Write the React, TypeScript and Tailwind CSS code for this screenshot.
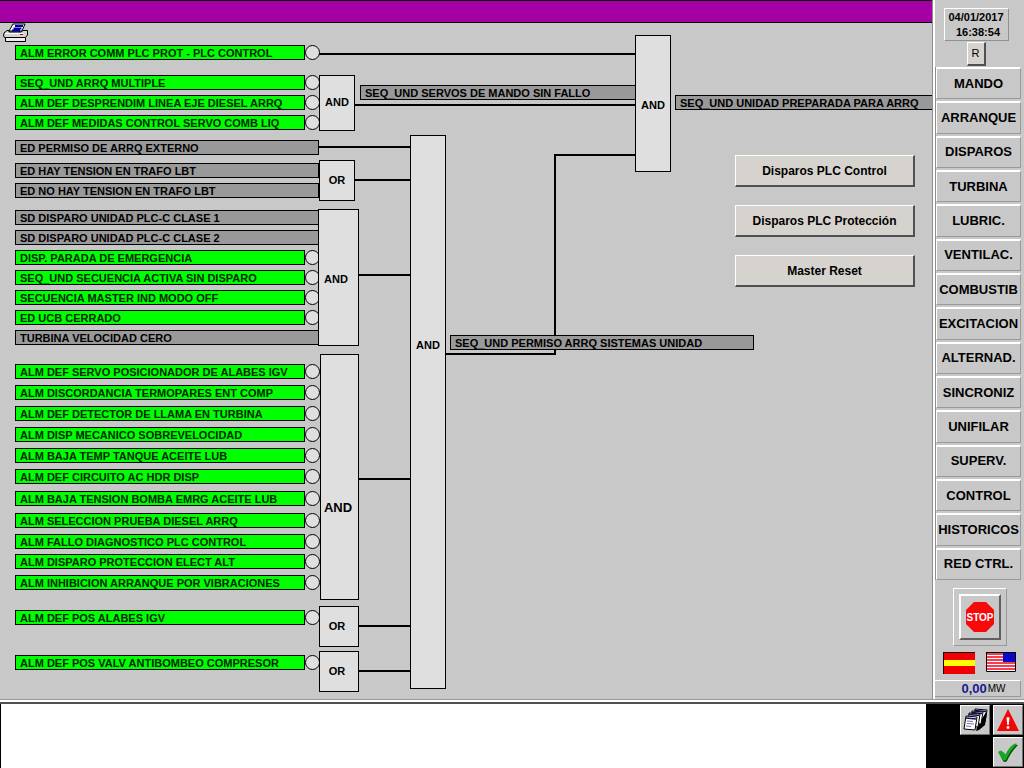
import React, { useState } from 'react';
import clsx from 'clsx';

type Signal = {
  text: string;
  top: number;
  // inverted inputs are drawn green with a negation circle
  inverted?: boolean;
};

type Gate = {
  label: string;
  left: number;
  top: number;
  width: number;
  height: number;
  labelTop: number;
  large?: boolean;
};

type Output = {
  text: string;
  left: number;
  top: number;
};

const signals: Signal[] = [
  { text: 'ALM ERROR COMM PLC PROT - PLC CONTROL', top: 45, inverted: true },
  { text: 'SEQ_UND ARRQ MULTIPLE', top: 75, inverted: true },
  { text: 'ALM DEF DESPRENDIM LINEA EJE DIESEL ARRQ', top: 95, inverted: true },
  { text: 'ALM DEF MEDIDAS CONTROL SERVO COMB LIQ', top: 115, inverted: true },
  { text: 'ED PERMISO DE ARRQ EXTERNO', top: 140 },
  { text: 'ED HAY TENSION EN TRAFO LBT', top: 163 },
  { text: 'ED NO HAY TENSION EN TRAFO LBT', top: 183 },
  { text: 'SD DISPARO UNIDAD PLC-C CLASE 1', top: 210 },
  { text: 'SD DISPARO UNIDAD PLC-C CLASE 2', top: 230 },
  { text: 'DISP. PARADA DE EMERGENCIA', top: 250, inverted: true },
  { text: 'SEQ_UND SECUENCIA ACTIVA SIN DISPARO', top: 270, inverted: true },
  { text: 'SECUENCIA MASTER IND MODO OFF', top: 290, inverted: true },
  { text: 'ED UCB CERRADO', top: 310, inverted: true },
  { text: 'TURBINA VELOCIDAD CERO', top: 330 },
  { text: 'ALM DEF SERVO POSICIONADOR DE ALABES IGV', top: 364, inverted: true },
  { text: 'ALM DISCORDANCIA TERMOPARES ENT COMP', top: 385, inverted: true },
  { text: 'ALM DEF DETECTOR DE LLAMA EN TURBINA', top: 406, inverted: true },
  { text: 'ALM DISP MECANICO SOBREVELOCIDAD', top: 427, inverted: true },
  { text: 'ALM BAJA TEMP TANQUE ACEITE LUB', top: 448, inverted: true },
  { text: 'ALM DEF CIRCUITO AC HDR DISP', top: 469, inverted: true },
  { text: 'ALM BAJA TENSION BOMBA EMRG ACEITE LUB', top: 491, inverted: true },
  { text: 'ALM SELECCION PRUEBA DIESEL ARRQ', top: 513, inverted: true },
  { text: 'ALM FALLO DIAGNOSTICO PLC CONTROL', top: 534, inverted: true },
  { text: 'ALM DISPARO PROTECCION ELECT ALT', top: 554, inverted: true },
  { text: 'ALM INHIBICION ARRANQUE POR VIBRACIONES', top: 575, inverted: true },
  { text: 'ALM DEF POS ALABES IGV', top: 610, inverted: true },
  { text: 'ALM DEF POS VALV ANTIBOMBEO COMPRESOR', top: 655, inverted: true },
];

const gates: Gate[] = [
  { label: 'AND', left: 319, top: 75, width: 36, height: 56, labelTop: 18 },
  { label: 'OR', left: 319, top: 160, width: 36, height: 41, labelTop: 11 },
  { label: 'AND', left: 318, top: 209, width: 41, height: 137, labelTop: 61 },
  { label: 'AND', left: 320, top: 354, width: 39, height: 246, labelTop: 145, large: true },
  { label: 'OR', left: 319, top: 606, width: 40, height: 41, labelTop: 11 },
  { label: 'OR', left: 319, top: 651, width: 40, height: 41, labelTop: 11 },
  { label: 'AND', left: 410, top: 135, width: 36, height: 554, labelTop: 201 },
  { label: 'AND', left: 635, top: 35, width: 36, height: 137, labelTop: 61 },
];

const outputs: Output[] = [
  { text: 'SEQ_UND SERVOS DE MANDO SIN FALLO', left: 360, top: 85 },
  { text: 'SEQ_UND UNIDAD PREPARADA PARA ARRQ', left: 675, top: 95 },
  { text: 'SEQ_UND PERMISO ARRQ SISTEMAS UNIDAD', left: 450, top: 335 },
];

const wires = [
  'M319 54H636',
  'M354 105H636',
  'M318 147H411',
  'M354 180H411',
  'M358 275H411',
  'M358 479H411',
  'M358 626H411',
  'M358 671H411',
  'M445 354H555V155H636',
];

const actions = ['Disparos PLC Control', 'Disparos PLC Protección', 'Master Reset'];

const menu = [
  'MANDO',
  'ARRANQUE',
  'DISPAROS',
  'TURBINA',
  'LUBRIC.',
  'VENTILAC.',
  'COMBUSTIB',
  'EXCITACION',
  'ALTERNAD.',
  'SINCRONIZ',
  'UNIFILAR',
  'SUPERV.',
  'CONTROL',
  'HISTORICOS',
  'RED CTRL.',
];

const PrinterIcon = () => (
  <svg width="26" height="20" viewBox="0 0 26 20" aria-hidden="true">
    <path d="M10 1H22L19 8H6Z" fill="#fff" stroke="#000" />
    <path d="M12 3H20M10.500 5.500H18.500M9 7.500H17" stroke="#0000b0" strokeWidth="1.800" />
    <path d="M1 10L4 7.500H6V9H18L20 7.500H24.500V12L22 15H2L0.500 13Z" fill="#d4d4d4" stroke="#000" />
    <path d="M2 10.500H20" stroke="#fff" />
    <path d="M17 11.500H20" stroke="#c00000" />
    <path d="M2.500 14.500H22.500V18.500H2.500Z" fill="#ececec" stroke="#000" />
  </svg>
);

const StopIcon = () => (
  <svg width="30" height="32" viewBox="0 0 30 32" aria-hidden="true">
    <path d="M9 1H21L29 9V23L21 31H9L1 23V9Z" fill="#f80808" />
    <text
      x="15"
      y="20"
      textAnchor="middle"
      fill="#fff"
      className="font-['Liberation_Sans_Narrow','Liberation_Sans',sans-serif] text-[10px] font-bold"
    >
      STOP
    </text>
  </svg>
);

const SpainFlag = () => (
  <svg width="32" height="22" viewBox="0 0 32 22" aria-hidden="true">
    <path d="M0 0H32V22H0Z" fill="#f00000" />
    <path d="M0 8H32V14H0Z" fill="#ffff00" />
    <path d="M0 0.500H32M0.500 0V22" stroke="#200000" />
  </svg>
);

const UsaFlag = () => (
  <svg width="30" height="20" viewBox="0 0 30 20" aria-hidden="true">
    <path d="M0 0H30V20H0Z" fill="#fff" />
    <path d="M0 2H30M0 5H30M0 8H30M0 11H30M0 14H30M0 17H30" stroke="#f00018" strokeWidth="1.600" />
    <path d="M17 0H30V10H17Z" fill="#0808c8" />
    <path d="M0.500 0V19.500H29.500V0.500H0" fill="none" stroke="#000" />
  </svg>
);

const PagesIcon = () => (
  <svg width="26" height="24" viewBox="0 0 26 24" aria-hidden="true">
    <path d="M13 1L25 2L23 14L12 13Z" fill="#fff" stroke="#000" />
    <path d="M24 4L25 5L23 17L17 22L14 23L15 19Z" fill="#000" />
    <path d="M10 3L21 4L19 16L9 15Z" fill="#fff" stroke="#000" />
    <path d="M7 5L18 6L16 19L6 18Z" fill="#fff" stroke="#000" />
    <path d="M4 8L15 9L13 22L2 21Z" fill="#fff" stroke="#000" />
    <path d="M5 13L11 13.500M5 15.500L12 16M4 18L9 18.500" stroke="#7070a0" />
    <path d="M13 2.500L24 3.500M10 4.500L20 5.500M7 6.500L17 7.500M4 10L14 11" stroke="#101050" strokeWidth="1.500" />
  </svg>
);

const AlertIcon = () => (
  <svg width="24" height="24" viewBox="0 0 24 24" aria-hidden="true">
    <path d="M12 1L23 23H1Z" fill="#f00808" />
    <path d="M10.500 10Q12 8 13.500 10L12.700 17H11.300Z" fill="#fff" />
    <circle cx="12" cy="19.500" r="1.400" fill="#fff" />
  </svg>
);

const CheckIcon = () => (
  <svg width="24" height="24" viewBox="0 0 24 24" aria-hidden="true">
    <path d="M3 13Q6 11 8 13L10 16Q14 8 19 5H22Q15 12 11 21Q9 23 7 21Z" fill="#064d06" />
    <path d="M2 12Q5 9 7 12L9 15Q13 7 18 4Q20 3 21 4Q14 11 10 20Q8 21 7 20Z" fill="#18a828" />
  </svg>
);

const SignalRow: React.FC<Signal> = ({ text, top, inverted }) => (
  <div className="absolute left-[15px] flex" style={{ top }}>
    <div
      className={clsx(
        'h-[15px] border border-black pl-1 text-[11px] leading-[14px] whitespace-nowrap',
        inverted ? 'w-[290px] bg-[#00ff00] text-[#002800]' : 'w-[304px] bg-[#999999]'
      )}
    >
      {text}
    </div>
    {inverted && <div className="h-[15px] w-[15px] rounded-full border border-black bg-[#dfdfdf]" />}
  </div>
);

const GateBox: React.FC<Gate> = ({ label, left, top, width, height, labelTop, large }) => (
  <div
    className="absolute border border-black bg-[#dfdfdf]"
    style={{ left, top, width, height, paddingTop: labelTop }}
  >
    <div className={clsx('w-[34px] text-center leading-4', large ? 'text-[13px]' : 'text-[11px]')}>{label}</div>
  </div>
);

const Diagram = () => (
  <div className="absolute inset-0 overflow-hidden">
    <svg className="absolute inset-0 h-full w-full" aria-hidden="true">
      {wires.map((d) => (
        <path key={d} d={d} fill="none" stroke="#000" strokeWidth="2" />
      ))}
    </svg>
    {signals.map((signal) => (
      <SignalRow key={signal.text} {...signal} />
    ))}
    {outputs.map(({ text, left, top }) => (
      <div
        key={text}
        className="absolute h-[15px] w-[304px] border border-black bg-[#999999] pl-1 text-[11px] leading-[14px] whitespace-nowrap"
        style={{ left, top }}
      >
        {text}
      </div>
    ))}
    {gates.map((gate) => (
      <GateBox key={`${gate.left}-${gate.top}`} {...gate} />
    ))}
  </div>
);

const Sidebar = () => {
  const [active, setActive] = useState('');

  return (
    <aside className="flex w-[92px] shrink-0 flex-col border-l border-[#8c8c8c]">
      <div className="flex flex-1 flex-col items-center border-l-2 border-white pr-[3px]">
        <div className="mt-2 mr-1 h-[33px] w-[65px] border border-t-white border-r-[#909090] border-b-[#909090] border-l-white pt-px text-center text-[11px] leading-[15px]">
          <div>04/01/2017</div>
          <div className="pl-1">16:38:54</div>
        </div>
        <button
          type="button"
          className="mt-px mr-1 h-[24px] w-[19px] border border-t-white border-r-2 border-r-[#505050] border-b-2 border-b-[#505050] border-l-white bg-[#d6d3ce] text-[11px] font-normal"
        >
          R
        </button>
        <nav className="mt-px flex h-[513px] w-full flex-col gap-[2px] border-l border-[#8c8c8c]">
          {menu.map((item) => (
            <button
              key={item}
              type="button"
              aria-pressed={active === item}
              onClick={() => setActive(item)}
              className="flex flex-1 items-center justify-center border border-t-2 border-t-white border-r-[#999999] border-b-[#999999] border-l-white text-[13px] leading-4 whitespace-nowrap"
            >
              {item}
            </button>
          ))}
        </nav>
        <div className="mt-2 ml-1 flex h-[58px] w-[54px] items-center justify-center border border-t-white border-r-[#999999] border-b-[#999999] border-l-white">
          <button
            type="button"
            aria-label="Stop"
            className="flex h-[46px] w-[42px] items-center justify-center border-2 border-t-white border-r-[#606060] border-b-[#606060] border-l-white"
          >
            <StopIcon />
          </button>
        </div>
        <div className="mt-[6px] flex w-full items-start justify-between pr-[5px] pl-2">
          <button type="button" aria-label="Español">
            <SpainFlag />
          </button>
          <button type="button" aria-label="English">
            <UsaFlag />
          </button>
        </div>
        <div className="mt-[6px] flex h-[17px] w-full items-center justify-center gap-px border border-t-white border-r-[#999999] border-b-[#999999] border-l-0 pl-3">
          <span className="text-[13px] leading-4 text-[#18188c]">0,00</span>
          <span className="text-[10px] leading-4 font-normal">MW</span>
        </div>
      </div>
    </aside>
  );
};

const bevel =
  'flex h-[30px] w-[30px] items-center justify-center border border-t-white border-r-[#707070] border-b-[#707070] border-l-white bg-[#c8c8c8]';

const App: React.FC = () => {
  return (
    <div className="flex min-h-screen flex-col bg-[#c8c8c8] font-['Liberation_Sans',Arial,sans-serif] font-bold text-black">
      <div className="flex flex-1">
        <main className="relative flex min-w-0 flex-1 flex-col">
          <Diagram />
          <header className="h-[23px] border-y border-black bg-[#a400a4]" />
          <button type="button" aria-label="Imprimir" className="relative ml-[3px] h-[20px] w-[26px]">
            <PrinterIcon />
          </button>
          <div className="relative mt-[112px] mr-[17px] flex w-[180px] flex-col gap-[18px] self-end">
            {actions.map((action) => (
              <button
                key={action}
                type="button"
                className="h-[32px] border border-t-white border-r-2 border-r-[#505050] border-b-2 border-b-[#505050] border-l-white bg-[#d6d3ce] text-[12px] leading-4"
              >
                {action}
              </button>
            ))}
          </div>
        </main>
        <Sidebar />
      </div>

      <div className="h-[5px] border-t border-b-2 border-t-[#999999] border-b-[#505050] bg-white" />

      <footer className="flex h-[64px]">
        <div className="flex-1 border-l border-black bg-white" />
        <div className="flex w-[98px] items-start justify-end gap-[3px] bg-black pt-px pr-px">
          <button type="button" aria-label="Listado" className={bevel}>
            <PagesIcon />
          </button>
          <div className="flex flex-col gap-[2px]">
            <button type="button" aria-label="Alarmas" className={bevel}>
              <AlertIcon />
            </button>
            <button type="button" aria-label="Reconocer" className={bevel}>
              <CheckIcon />
            </button>
          </div>
        </div>
      </footer>
    </div>
  );
};

export default App;
